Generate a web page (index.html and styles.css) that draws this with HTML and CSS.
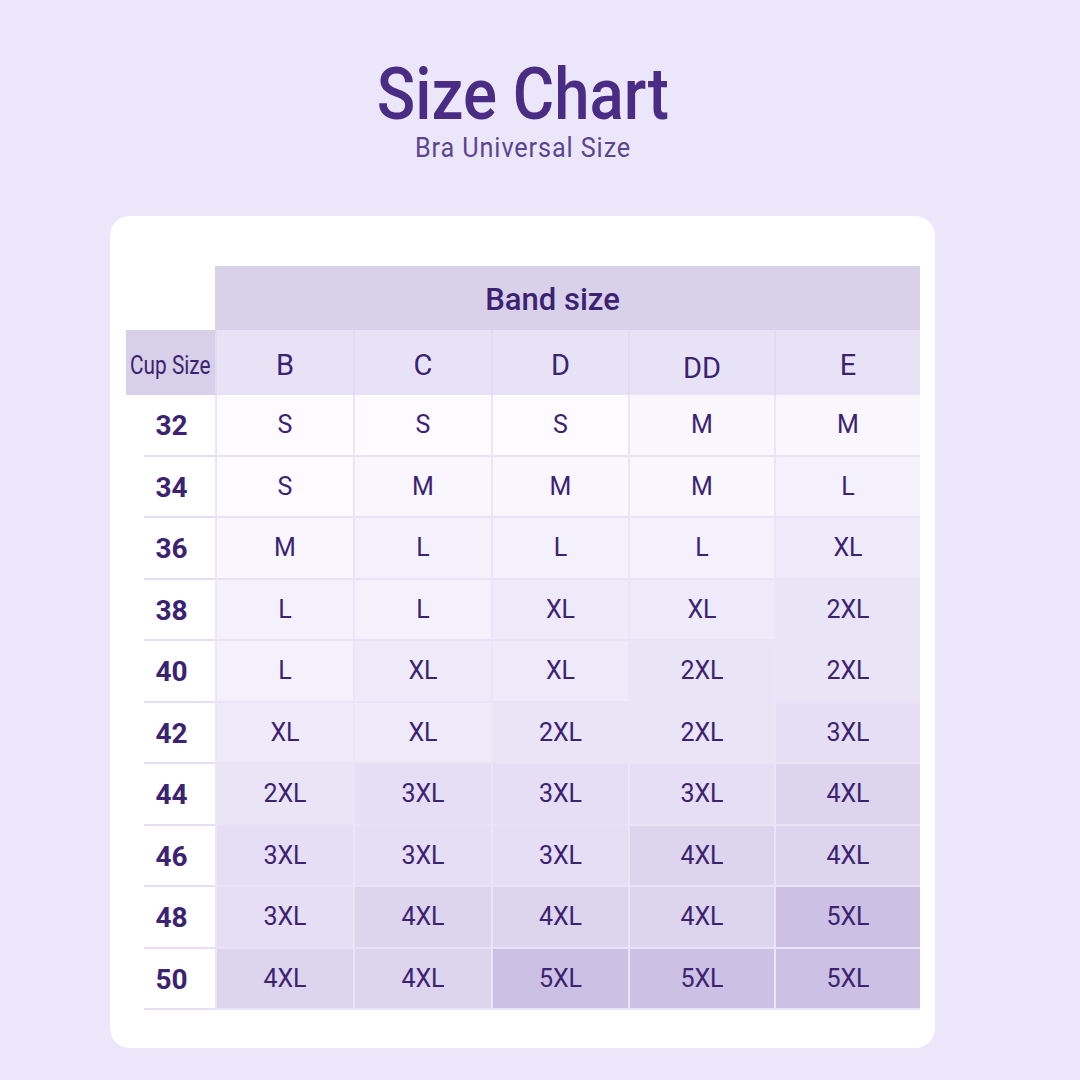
FILE: index.html
```html
<!DOCTYPE html>
<html lang="en">
<head>
<meta charset="utf-8">
<title>Size Chart</title>
<link rel="stylesheet" href="styles.css">
</head>
<body>
<main class="page">
  <header class="heading">
    <h1 class="title">Size Chart</h1>
    <p class="subtitle">Bra Universal Size</p>
  </header>
  <section class="card">
    <div class="chart">
      <div class="corner"></div>
      <div class="band">Band size</div>

      <div class="cup-label"><span class="narrow">Cup Size</span></div>
      <div class="cup">B</div>
      <div class="cup">C</div>
      <div class="cup">D</div>
      <div class="cup low">DD</div>
      <div class="cup">E</div>

      <div class="num">32</div><div class="cell s">S</div><div class="cell s">S</div><div class="cell s">S</div><div class="cell m">M</div><div class="cell m">M</div>
      <div class="num">34</div><div class="cell s">S</div><div class="cell m">M</div><div class="cell m">M</div><div class="cell m">M</div><div class="cell l">L</div>
      <div class="num">36</div><div class="cell m">M</div><div class="cell l">L</div><div class="cell l">L</div><div class="cell l">L</div><div class="cell xl">XL</div>
      <div class="num">38</div><div class="cell l">L</div><div class="cell l">L</div><div class="cell xl">XL</div><div class="cell xl">XL</div><div class="cell x2">2XL</div>
      <div class="num">40</div><div class="cell l">L</div><div class="cell xl">XL</div><div class="cell xl">XL</div><div class="cell x2">2XL</div><div class="cell x2">2XL</div>
      <div class="num">42</div><div class="cell xl">XL</div><div class="cell xl">XL</div><div class="cell x2">2XL</div><div class="cell x2">2XL</div><div class="cell x3">3XL</div>
      <div class="num">44</div><div class="cell x2">2XL</div><div class="cell x3">3XL</div><div class="cell x3">3XL</div><div class="cell x3">3XL</div><div class="cell x4">4XL</div>
      <div class="num">46</div><div class="cell x3">3XL</div><div class="cell x3">3XL</div><div class="cell x3">3XL</div><div class="cell x4">4XL</div><div class="cell x4">4XL</div>
      <div class="num">48</div><div class="cell x3">3XL</div><div class="cell x4">4XL</div><div class="cell x4">4XL</div><div class="cell x4">4XL</div><div class="cell x5">5XL</div>
      <div class="num">50</div><div class="cell x4">4XL</div><div class="cell x4">4XL</div><div class="cell x5">5XL</div><div class="cell x5">5XL</div><div class="cell x5">5XL</div>
    </div>
  </section>
</main>
</body>
</html>
```

FILE: styles.css
```css
* { box-sizing: border-box; }

html, body {
  margin: 0;
  padding: 0;
}

body {
  width: 1080px;
  height: 1080px;
  background: #ece6fa;
  font-family: "Roboto", "Liberation Sans", sans-serif;
  color: #3c2372;
  overflow: hidden;
}

.page {
  display: flex;
  flex-direction: column;
  align-items: center;
}

.heading {
  display: flex;
  flex-direction: column;
  align-items: center;
  margin-left: -34px;
  padding-top: 60px;
}

.title {
  margin: 0;
  font-size: 73px;
  line-height: 68px;
  font-weight: 500;
  color: #4a2c84;
  transform: scaleX(0.87);
}

.subtitle {
  margin: 6px 0 0;
  font-size: 28px;
  line-height: 28px;
  font-weight: 400;
  color: #5a4591;
  letter-spacing: 1px;
  transform: scaleX(0.9);
}

.card {
  margin-top: 54px;
  margin-left: -35px;
  width: 825px;
  height: 832px;
  background: #ffffff;
  border-radius: 20px;
  padding: 50px 15px 38px 16px;
}

.chart {
  display: grid;
  grid-template-columns: 89px 138px 138px 137px 146px 146px;
  grid-template-rows: 64px 65px repeat(10, 61.5px);
}

.corner { background: transparent; }

.band {
  grid-column: 2 / span 5;
  background: #d9d0ea;
  display: flex;
  align-items: center;
  justify-content: center;
  font-size: 31px;
  font-weight: 500;
  color: #3c2372;
  padding: 2px 30px 0 0;
}

.cup-label {
  background: #d8cfe9;
  display: flex;
  align-items: center;
  justify-content: center;
  font-size: 26px;
  color: #3c2372;
  white-space: nowrap;
  padding-top: 4px;
}

.narrow {
  display: inline-block;
  transform: scaleX(0.8);
}

.cup {
  background: #e8e2f6;
  display: flex;
  align-items: center;
  justify-content: center;
  font-size: 29px;
  color: #3c2372;
  border-left: 2px solid #e2dbf4;
  padding-top: 4px;
}

.cup.low { padding-top: 10px; }

.num {
  display: flex;
  align-items: center;
  justify-content: center;
  padding-left: 2px;
  font-size: 28px;
  font-weight: 700;
  color: #3c2372;
  background: linear-gradient(#e6dff5, #e6dff5) no-repeat 18px 100% / calc(100% - 18px) 2px;
}

.cell {
  display: flex;
  align-items: center;
  justify-content: center;
  font-size: 25px;
  color: #3c2372;
  border-left: 2px solid #ebe5f9;
  border-bottom: 2px solid #e9e3f7;
}

.s  { background: #fdfbff; }
.m  { background: #f9f6fe; }
.l  { background: #f4f0fc; }
.xl { background: #efeafa; }
.x2 { background: #eae4f7; }
.x3 { background: #e5def4; }
.x4 { background: #ddd4ee; }
.x5 { background: #ccc1e4; }
```
